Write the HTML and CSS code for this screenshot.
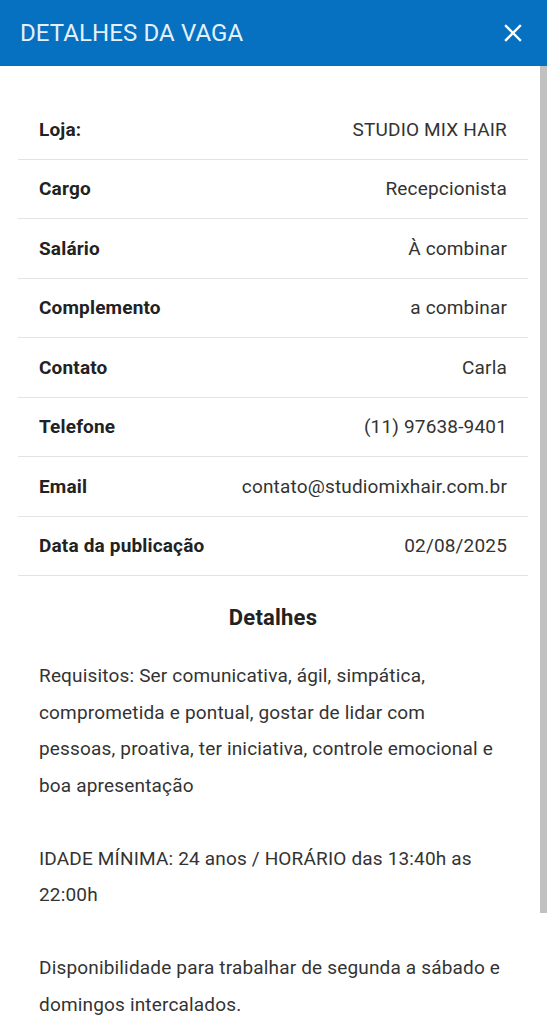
FILE: index.html
```html
<!DOCTYPE html>
<html lang="pt-BR">
<head>
  <meta charset="UTF-8">
  <title>Detalhes da Vaga</title>
  <meta name="viewport" content="width=device-width, initial-scale=1.0">
  <link rel="stylesheet" href="styles.css">
</head>
<body>

  <!-- Header -->
  <header class="topbar">
    <h1>DETALHES DA VAGA</h1>
    <button class="close-btn" aria-label="Fechar">
      <svg width="18" height="18" viewBox="0 0 18 18">
        <path d="M2 2 L16 16 M16 2 L2 16" stroke="#fff" stroke-width="2.4" stroke-linecap="square"/>
      </svg>
    </button>
  </header>

  <main class="content">
    <div class="info">
      <div class="row"><span class="label">Loja:</span><span class="value">STUDIO MIX HAIR</span></div>
      <div class="row"><span class="label">Cargo</span><span class="value">Recepcionista</span></div>
      <div class="row"><span class="label">Salário</span><span class="value">À combinar</span></div>
      <div class="row"><span class="label">Complemento</span><span class="value">a combinar</span></div>
      <div class="row"><span class="label">Contato</span><span class="value">Carla</span></div>
      <div class="row"><span class="label">Telefone</span><span class="value">(11) 97638-9401</span></div>
      <div class="row"><span class="label">Email</span><span class="value">contato@studiomixhair.com.br</span></div>
      <div class="row"><span class="label">Data da publicação</span><span class="value">02/08/2025</span></div>
    </div>

    <h3>Detalhes</h3>

    <div class="details">
      <p>Requisitos: Ser comunicativa, ágil, simpática, comprometida e pontual, gostar de lidar com pessoas, proativa, ter iniciativa, controle emocional e boa apresentação</p>
      <p>IDADE MÍNIMA: 24 anos / HORÁRIO das 13:40h as 22:00h</p>
      <p>Disponibilidade para trabalhar de segunda a sábado e domingos intercalados.</p>
    </div>
  </main>

  <!-- scroll thumb -->
  <div class="scroll-thumb"></div>

</body>
</html>
```

FILE: styles.css
```css
body {
  font-family: 'Roboto', 'Liberation Sans', sans-serif;
  background: #fff;
  color: #222;
  margin: 0;
  overflow: hidden;
}

.topbar {
  height: 66px;
  background: #0670c1;
  display: flex;
  align-items: center;
  justify-content: space-between;
  padding: 0 19px 0 20px;
}

.topbar h1 {
  margin: 0;
  font-size: 24px;
  font-weight: 400;
  color: #e4f1fc;
  letter-spacing: 0.1px;
}

.close-btn {
  background: none;
  border: none;
  padding: 6px;
  display: flex;
  cursor: pointer;
}

.content {
  padding: 34px 19px 0 18px;
}

.info {
  font-size: 19px;
  letter-spacing: 0.17px;
}

.info .row {
  display: flex;
  justify-content: space-between;
  align-items: center;
  gap: 16px;
  height: 58.5px;
  padding: 0 21px;
  border-bottom: 1px solid #e3e3e3;
}

.info .label {
  font-weight: 700;
  color: #222;
  white-space: nowrap;
}

.info .value {
  text-align: right;
  color: #333;
  white-space: nowrap;
}

h3 {
  text-align: center;
  font-size: 22px;
  font-weight: 700;
  letter-spacing: 0.2px;
  color: #222;
  margin: 29px 0 28px;
}

.details {
  padding: 0 24px 0 21px;
  font-size: 19px;
  letter-spacing: 0.17px;
  line-height: 36.5px;
  color: #333;
}

.details p {
  margin: 0 0 36.5px;
}

.scroll-thumb {
  position: fixed;
  top: 66px;
  right: 0;
  width: 7px;
  height: 847px;
  background: #c1c1c1;
}
```
